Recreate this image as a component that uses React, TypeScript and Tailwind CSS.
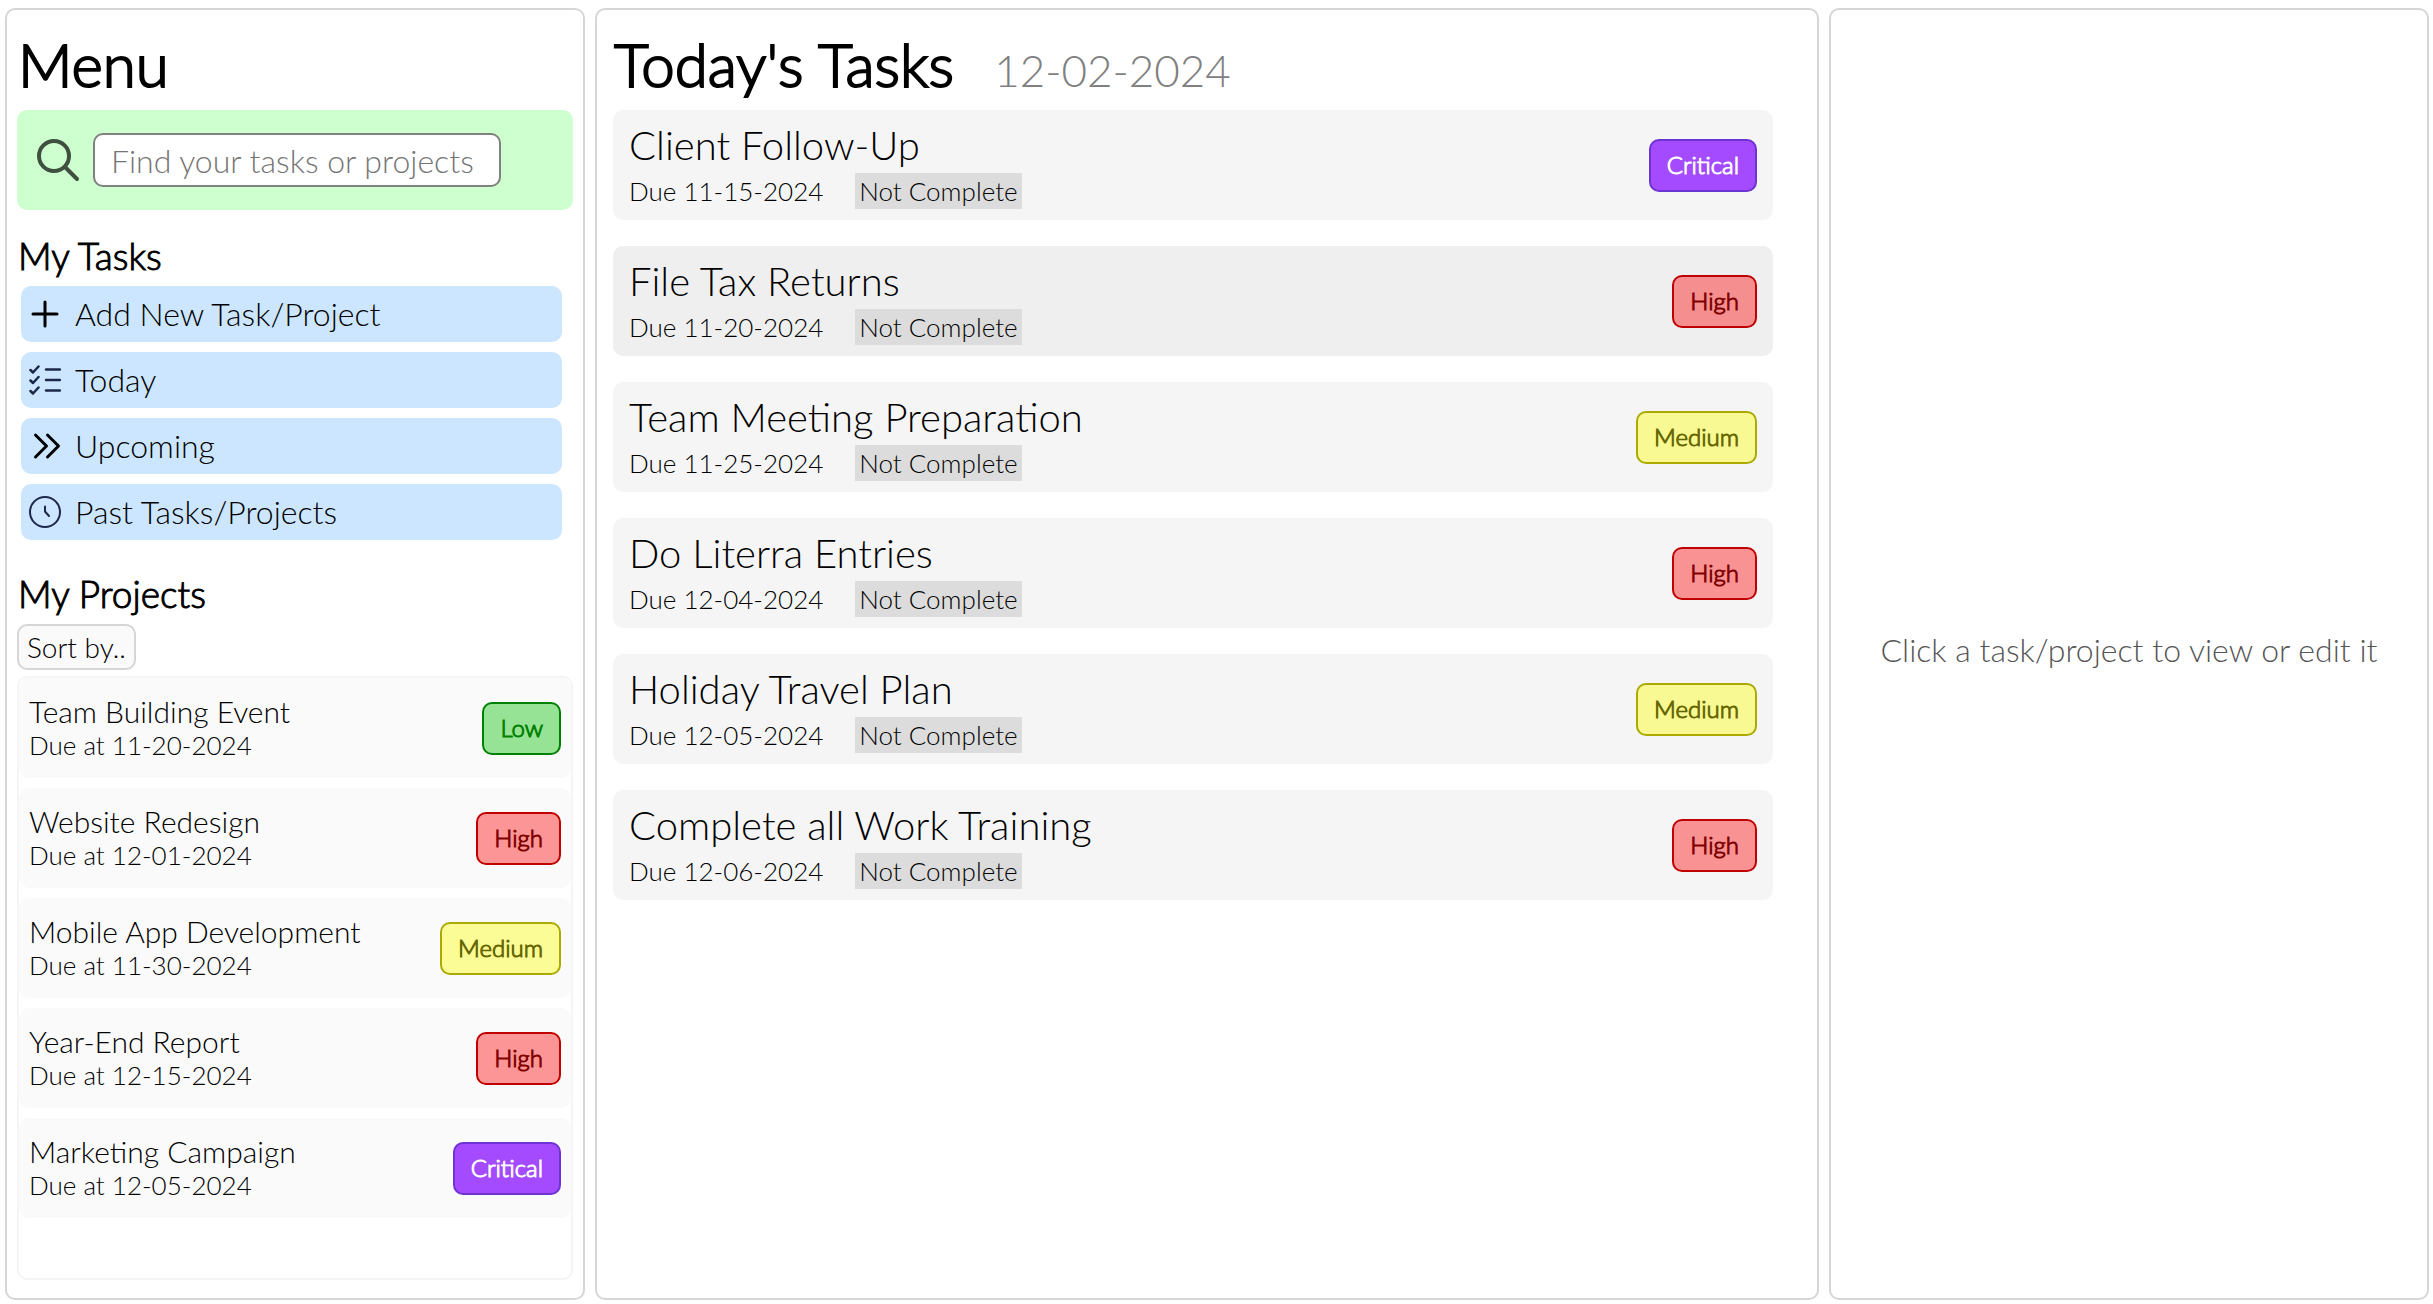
import type { ReactNode } from "react";

type Priority = "Low" | "Medium" | "High" | "Critical";

const badgeStyles: Record<Priority, string> = {
  Low: "border-[#008000] bg-[#00c000]/40 text-[#008000]",
  Medium: "border-[#aaaa00] bg-[#ffff00]/40 text-[#666600]",
  High: "border-[#c00000] bg-[#ff0000]/40 text-[#800000]",
  Critical: "border-[#6c35d3] bg-[#a44aff] text-white",
};

const projects: { name: string; due: string; priority: Priority }[] = [
  { name: "Team Building Event", due: "11-20-2024", priority: "Low" },
  { name: "Website Redesign", due: "12-01-2024", priority: "High" },
  { name: "Mobile App Development", due: "11-30-2024", priority: "Medium" },
  { name: "Year-End Report", due: "12-15-2024", priority: "High" },
  { name: "Marketing Campaign", due: "12-05-2024", priority: "Critical" },
];

const tasks: { name: string; due: string; priority: Priority; active?: boolean }[] = [
  { name: "Client Follow-Up", due: "11-15-2024", priority: "Critical" },
  { name: "File Tax Returns", due: "11-20-2024", priority: "High", active: true },
  { name: "Team Meeting Preparation", due: "11-25-2024", priority: "Medium" },
  { name: "Do Literra Entries", due: "12-04-2024", priority: "High" },
  { name: "Holiday Travel Plan", due: "12-05-2024", priority: "Medium" },
  { name: "Complete all Work Training", due: "12-06-2024", priority: "High" },
];

function PriorityBadge({ priority }: { priority: Priority }) {
  return (
    <span
      className={`shrink-0 rounded-[10px] border-2 px-4 pt-[7px] pb-[9px] text-[24px] leading-[33px] [-webkit-text-stroke:1px] ${badgeStyles[priority]}`}
    >
      {priority}
    </span>
  );
}

function Icon({ children, color, width }: { children: ReactNode; color: string; width: number }) {
  return (
    <svg
      className="size-8 shrink-0"
      viewBox="0 0 32 32"
      fill="none"
      stroke={color}
      strokeWidth={width}
      strokeLinecap="round"
      strokeLinejoin="round"
      aria-hidden="true"
    >
      {children}
    </svg>
  );
}

function MenuButton({ icon, label }: { icon: ReactNode; label: string }) {
  return (
    <button className="flex h-14 items-center gap-[14px] rounded-[10px] bg-[#cce6ff] px-2 text-left text-[32px] leading-10">
      {icon}
      <span>{label}</span>
    </button>
  );
}

function PageTitle({ children }: { children: ReactNode }) {
  return <h1 className="pl-px text-[60px] leading-[76px] [-webkit-text-stroke:2px]">{children}</h1>;
}

function SectionTitle({ children }: { children: ReactNode }) {
  return <h2 className="pl-px text-[37px] leading-[44px] [-webkit-text-stroke:1px]">{children}</h2>;
}

function Panel({ children, as: Tag }: { children: ReactNode; as: "nav" | "main" | "aside" }) {
  return <Tag className="flex min-w-0 flex-col rounded-[10px] border-2 border-[#d6d6d6] px-[10px]">{children}</Tag>;
}

export default function App() {
  return (
    <div className="grid min-h-screen grid-cols-[580fr_1224fr_600fr] gap-[10px] bg-white pt-2 pr-1 pb-1 pl-[5px] font-['Lato',sans-serif] font-light text-black">
      <Panel as="nav">
        <header className="pt-4 pb-2">
          <PageTitle>Menu</PageTitle>
        </header>
        <label className="flex h-[100px] items-center gap-3 rounded-[10px] bg-[#ceffce] pl-5">
          <svg
            className="size-11 shrink-0"
            viewBox="0 0 44 44"
            fill="none"
            stroke="#405040"
            strokeWidth="4"
            strokeLinecap="round"
            aria-hidden="true"
          >
            <circle cx="17" cy="18" r="15" />
            <path d="M28 29l12 12" />
          </svg>
          <input
            type="text"
            aria-label="Find your tasks or projects"
            placeholder="Find your tasks or projects"
            className="h-[54px] w-[408px] rounded-[10px] border-2 border-[#808080] bg-white px-4 text-[32px] leading-10 placeholder:text-[#757575]"
          />
        </label>

        <section className="pt-6">
          <SectionTitle>My Tasks</SectionTitle>
          <div className="mt-2 mr-[11px] ml-1 flex flex-col gap-[10px]">
            <MenuButton
              label="Add New Task/Project"
              icon={
                <Icon color="#000000" width={3}>
                  <path d="M16 4v24M4 16h24" />
                </Icon>
              }
            />
            <MenuButton
              label="Today"
              icon={
                <Icon color="#1c274c" width={2.5}>
                  <path d="M17 5.500h14M17 16h14M17 26.500h14M1.500 6l2.500 2.500 5.500-6M1.500 16.500l2.500 2.500 5.500-6M1.500 27l2.500 2.500 5.500-6" />
                </Icon>
              }
            />
            <MenuButton
              label="Upcoming"
              icon={
                <Icon color="#000000" width={3}>
                  <path d="M6.500 5l11 11-11 11M18.500 5l11 11-11 11" />
                </Icon>
              }
            />
            <MenuButton
              label="Past Tasks/Projects"
              icon={
                <Icon color="#1c274c" width={2}>
                  <circle cx="16" cy="16" r="15" />
                  <path d="M16 10.500v5l4 4.500" />
                </Icon>
              }
            />
          </div>
        </section>

        <section className="flex grow flex-col pt-8 pb-[18px]">
          <SectionTitle>My Projects</SectionTitle>
          <button className="mt-2 h-[46px] self-start rounded-[10px] border-2 border-[#d6d6d6] bg-[#fafafa] px-2 text-[28px] leading-9">
            Sort by..
          </button>
          <ul className="mt-[6px] flex grow flex-col gap-[10px] rounded-[10px] border-2 border-[#f5f5f5]">
            {projects.map((p) => (
              <li
                key={p.name}
                className="flex h-[100px] items-center justify-between rounded-[10px] bg-[#fafafa] px-[10px]"
              >
                <div className="leading-[34px]">
                  <h3 className="text-[30px]">{p.name}</h3>
                  <p className="text-[26px]">Due at {p.due}</p>
                </div>
                <PriorityBadge priority={p.priority} />
              </li>
            ))}
          </ul>
        </section>
      </Panel>

      <Panel as="main">
        <header className="flex items-end gap-10 pt-4 pb-2 pl-[6px]">
          <PageTitle>Today's Tasks</PageTitle>
          <p className="text-[44px] leading-[64px] text-[#808080]">12-02-2024</p>
        </header>
        <ul className="mr-[34px] ml-[6px] flex flex-col gap-[26px]">
          {tasks.map((t) => (
            <li
              key={t.name}
              className={`flex h-[110px] items-center justify-between rounded-[10px] px-4 ${t.active ? "bg-[#efefef]" : "bg-[#f5f5f5]"}`}
            >
              <div>
                <h2 className="mb-1 text-[40px] leading-[48px]">{t.name}</h2>
                <p className="flex items-center gap-8 text-[26px] leading-9">
                  <span>Due {t.due}</span>
                  <span className="bg-[#dcdcdc] px-1">Not Complete</span>
                </p>
              </div>
              <PriorityBadge priority={t.priority} />
            </li>
          ))}
        </ul>
      </Panel>

      <Panel as="aside">
        <p className="m-auto pb-2 text-center text-[32px] leading-10 text-[#555555]">
          Click a task/project to view or edit it
        </p>
      </Panel>
    </div>
  );
}
